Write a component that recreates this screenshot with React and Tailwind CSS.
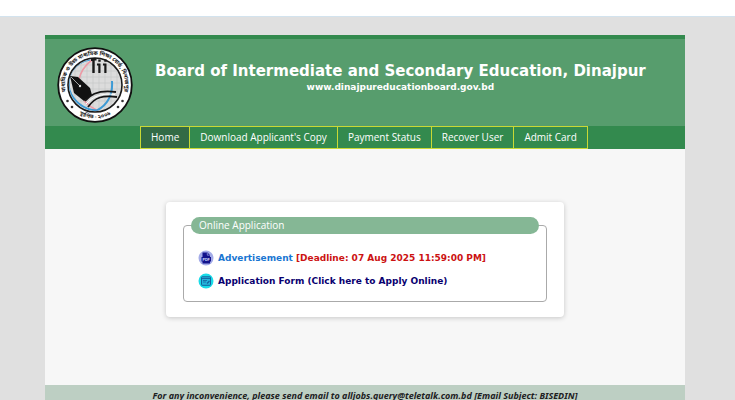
import React from "react";

const navItems = [
  "Home",
  "Download Applicant's Copy",
  "Payment Status",
  "Recover User",
  "Admit Card",
];

function BoardLogo() {
  return (
    <svg viewBox="0 0 76 76" className="size-[76px] shrink-0 overflow-visible" role="img" aria-label="Dinajpur Education Board logo">
      <defs>
        <path id="ring-top" d="M10.500 50A30 30 0 1 1 65.500 50" />
        <path id="ring-bottom" d="M4.500 38A33.500 33.500 0 0 0 71.500 38" />
        <clipPath id="inner-disc"><circle cx="38" cy="38" r="26" /></clipPath>
      </defs>
      <circle cx="38" cy="38" r="36.8" fill="#fff" stroke="#111" strokeWidth="1.8" />
      <circle cx="38" cy="38" r="27" fill="#dcdcdc" stroke="#1a1a1a" strokeWidth="1.6" />
      <g clipPath="url(#inner-disc)">
        <path d="M10 18H66M10 24H66M10 30H66M10 36H66M10 42H66M10 48H66M10 54H66M18 10V66M24 10V66M30 10V66M36 10V66M42 10V66M48 10V66M54 10V66M60 10V66" stroke="#c4c6c6" strokeWidth="0.6" />
        <path d="M36 12C27 19 23 25 22 33" fill="none" stroke="#ed99a5" strokeWidth="1.6" />
        <path d="M27 54C31 58 35 61 41 64" fill="none" stroke="#ed99a5" strokeWidth="1.6" />
        <path d="M33 12.500C18 15 9 28 12.500 43C16 54 27 63 40 63.500C50 58 56 48 55 34" fill="none" stroke="#3c9ad5" strokeWidth="2" />
      </g>
      <path d="M34 11H39.500V13.500H37.700V26H35.300V14H34ZM40 16.500H43.500V26H41.300V18.500H40ZM46 16.500H49.500V26H47.300V18.500H46ZM41.300 12.500H43.700V14.800H41.300ZM47.300 12.500H49.700V14.800H47.300Z" fill="#181818" />
      <path d="M13 29L21 30L33 41L35 48L27 54L17 46Z" fill="#111" />
      <path d="M14 30L22 38" stroke="#ccc" strokeWidth="0.8" />
      <circle cx="23" cy="39" r="1.200" fill="#ddd" />
      <path d="M28 54C35 45 45 43 59 45M31 60C38 50 46 48 60 50" fill="none" stroke="#151515" strokeWidth="1.800" />
      <path d="M29 57C36 49 45 46 58 47.500" fill="none" stroke="#fff" strokeWidth="1" />
      <g fill="#222" className="font-['Noto_Sans_Bengali','Noto_Sans',sans-serif] font-bold">
        <text fontSize="5.500"><textPath href="#ring-top" startOffset="50%" textAnchor="middle">মাধ্যমিক ও উচ্চ মাধ্যমিক শিক্ষা বোর্ড, দিনাজপুর</textPath></text>
        <text fontSize="5.500"><textPath href="#ring-bottom" startOffset="50%" textAnchor="middle">স্থাপিত - ২০০৬</textPath></text>
      </g>
      <g fill="#333">
        <circle cx="10.500" cy="54" r="1.300" /><circle cx="15" cy="60" r="1.300" />
        <circle cx="65.500" cy="54" r="1.300" /><circle cx="61" cy="60" r="1.300" />
      </g>
    </svg>
  );
}

function PdfIcon() {
  return (
    <svg viewBox="0 0 16 16" className="size-4 shrink-0" aria-hidden="true">
      <circle cx="8" cy="8" r="7.500" fill="#a3abe8" />
      <path d="M4.500 2.500H9.500L12 5V7H13V11.500H12V13.500H4.500V11.500H3.500V7H4.500Z" fill="#12128c" />
      <path d="M9.300 2.800V5.200H11.800" fill="none" stroke="#a3abe8" strokeWidth="0.700" />
      <text x="8.200" y="10.600" fontSize="3.600" textAnchor="middle" fill="#dfe2ff" className="font-['Liberation_Sans',sans-serif] font-bold">PDF</text>
    </svg>
  );
}

function FormIcon() {
  return (
    <svg viewBox="0 0 16 16" className="size-4 shrink-0" aria-hidden="true">
      <circle cx="8" cy="8" r="7.500" fill="#19dce8" />
      <rect x="3.500" y="3.800" width="9" height="8.500" rx="0.600" fill="#24b4dc" stroke="#14639f" strokeWidth="1" />
      <path d="M3.500 5.500H12.500" stroke="#14639f" strokeWidth="0.900" />
      <path d="M5 7.500H9M5 9H8" stroke="#14639f" strokeWidth="0.800" />
      <path d="M9 10.500L11.500 8" stroke="#14639f" strokeWidth="1.200" />
    </svg>
  );
}

export default function App() {
  return (
    <div className="flex h-screen flex-col overflow-hidden bg-[#e0e0e0] pt-4 font-['DejaVu_Sans',sans-serif] [background-clip:content-box]">
      <div className="flex min-h-0 grow flex-col border-t border-[#d3e3ee] pt-[18px] pr-[5px]">
        <div className="mx-auto flex w-full max-w-[640px] grow flex-col bg-[#f7f7f7]">
          <header className="flex h-[91px] shrink-0 gap-[22px] border-t-4 border-[#338a4e] bg-[#579d6d] pt-2 pl-3">
            <BoardLogo />
            <div className="pt-[14px] text-white">
              <h1 className="text-[15px] leading-5 font-bold whitespace-nowrap">
                Board of Intermediate and Secondary Education, Dinajpur
              </h1>
              <p className="text-center text-[9px] leading-3 font-bold">www.dinajpureducationboard.gov.bd</p>
            </div>
          </header>
          <nav className="flex h-[23px] shrink-0 -space-x-px bg-[#338a4e] pl-[95px] font-['Open_Sans',sans-serif]">
            {navItems.map((item, i) => (
              <a
                key={item}
                href="#"
                className={`flex items-center border border-[#c9d935] px-[10px] text-[10px] whitespace-nowrap text-white ${i === 0 ? "bg-[#336b45]" : ""}`}
              >
                {item}
              </a>
            ))}
          </nav>
          <main className="flex h-[236px] shrink-0 items-start justify-center pt-[53px]">
            <section className="w-[398px] rounded bg-white px-[17px] py-[15px] shadow-[0_1px_5px_rgba(0,0,0,0.2)]">
              <fieldset className="rounded border border-[#aaaaaa] px-[7px] pb-3">
                <legend className="h-[17px] w-full rounded-full bg-[#85b795] px-2 font-['Open_Sans',sans-serif] text-[10px] leading-[17px] text-white">
                  Online Application
                </legend>
                <ul className="flex flex-col gap-[7px] pt-4 pl-[7px] text-[9px] leading-4 font-bold">
                  <li className="flex items-center gap-1">
                    <PdfIcon />
                    <p><a href="#" className="text-[#1976d2]">Advertisement</a> <span className="text-[#cc1212]">[Deadline: 07 Aug 2025 11:59:00 PM]</span></p>
                  </li>
                  <li className="flex items-center gap-1">
                    <FormIcon />
                    <a href="#" className="text-[#090070]">Application Form (Click here to Apply Online)</a>
                  </li>
                </ul>
              </fieldset>
            </section>
          </main>
          <footer className="shrink-0 bg-[#bdcfc3] pt-[5px] text-center font-['Noto_Sans',sans-serif] text-[9px] leading-3 font-bold whitespace-nowrap text-[#1d211f] italic">
            For any inconvenience, please send email to alljobs.query@teletalk.com.bd [Email Subject: BISEDIN]
          </footer>
        </div>
      </div>
    </div>
  );
}
